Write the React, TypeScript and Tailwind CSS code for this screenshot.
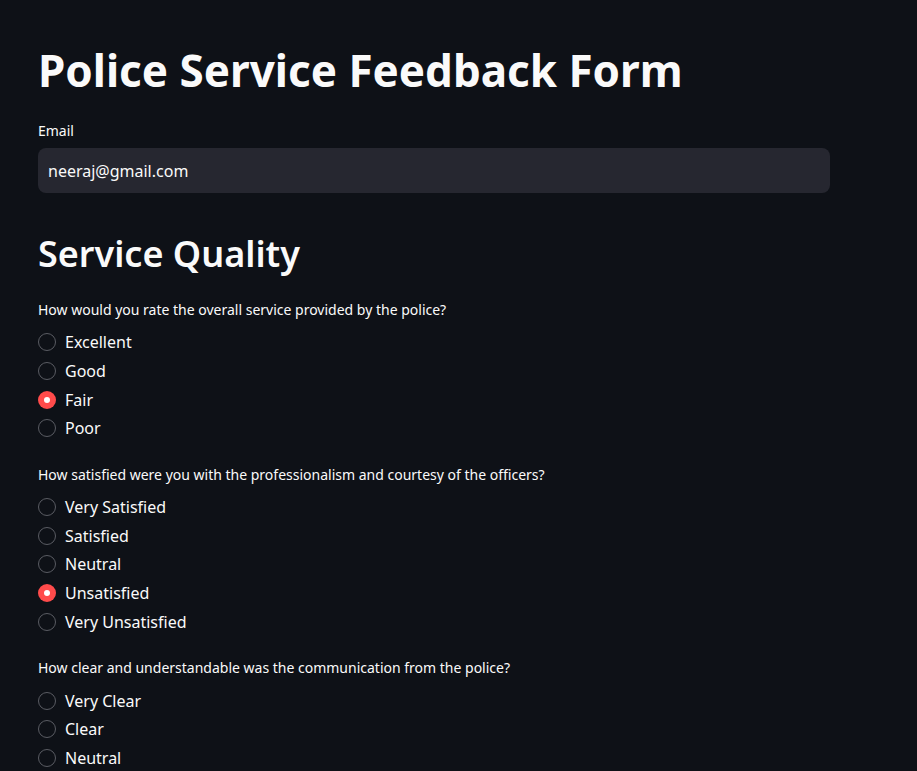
import React from "react";

type Q = { label: string; options: string[]; selected: number };

const questions: Q[] = [
  {
    label: "How would you rate the overall service provided by the police?",
    options: ["Excellent", "Good", "Fair", "Poor"],
    selected: 2,
  },
  {
    label: "How satisfied were you with the professionalism and courtesy of the officers?",
    options: ["Very Satisfied", "Satisfied", "Neutral", "Unsatisfied", "Very Unsatisfied"],
    selected: 3,
  },
  {
    label: "How clear and understandable was the communication from the police?",
    options: ["Very Clear", "Clear", "Neutral"],
    selected: -1,
  },
];

function Radio({ checked }: { checked: boolean }) {
  if (checked) {
    return (
      <span className="flex h-[18px] w-[18px] items-center justify-center rounded-full bg-[#ff4b4b]">
        <span className="h-[6px] w-[6px] rounded-full bg-white" />
      </span>
    );
  }
  return <span className="h-[18px] w-[18px] rounded-full border border-[#5a5c63]" />;
}

export default function App() {
  return (
    <div
      className="h-[771px] w-full overflow-hidden bg-[#0e1117] text-[#fafafa]"
      style={{ fontFamily: "'Noto Sans', sans-serif" }}
    >
      <div className="ml-[38px] w-[792px] pt-[44px]">
        <h1 className="h-[52px] text-[44px] font-bold leading-[52px]">
          Police Service Feedback Form
        </h1>
        <div className="mt-[25px] h-5 text-[14px] leading-5">Email</div>
        <div className="mt-[7px] flex h-[45px] items-center rounded-lg bg-[#262730] px-[10px] text-[16px]">
          neeraj@gmail.com
        </div>
        <h2 className="mt-[39px] h-[44px] text-[36px] font-semibold leading-[44px]">
          Service Quality
        </h2>
        <div className="mt-[24px] flex flex-col gap-[22px]">
          {questions.map((q, qi) => (
            <div key={qi}>
              <div className="h-5 text-[14px] leading-5">{q.label}</div>
              <div className="mt-[8px] flex flex-col">
                {q.options.map((o, oi) => (
                  <div key={oi} className="flex h-[28.7px] items-center">
                    <Radio checked={oi === q.selected} />
                    <span className="ml-[9px] text-[16px]">{o}</span>
                  </div>
                ))}
              </div>
            </div>
          ))}
        </div>
      </div>
    </div>
  );
}
